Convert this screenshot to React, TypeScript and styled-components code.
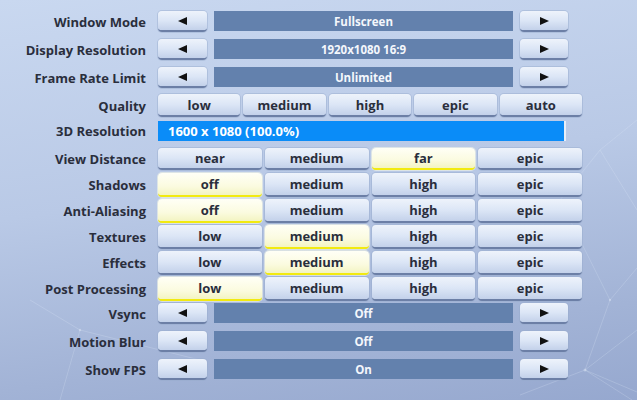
import styled, { createGlobalStyle } from "styled-components";

const Global = createGlobalStyle`
  html, body {
    margin: 0;
    padding: 0;
  }
  body {
    font-family: "Open Sans", "Noto Sans", "DejaVu Sans", sans-serif;
  }
`;

const Screen = styled.div`
  position: relative;
  width: 637px;
  height: 400px;
  overflow: hidden;
  background: linear-gradient(172deg, #c9d8f0 0%, #b9c9e6 45%, #a2b3d6 80%, #96a8cf 100%);
`;

const Web = styled.svg`
  position: absolute;
  inset: 0;
  pointer-events: none;
`;

const Rows = styled.div`
  position: relative;
  display: flex;
  flex-direction: column;
  padding-top: 11px;
`;

const Row = styled.div<{ $h: number }>`
  display: flex;
  align-items: flex-start;
  height: ${(p) => p.$h}px;
`;

const Label = styled.div<{ $h: number }>`
  width: 146px;
  height: ${(p) => p.$h}px;
  margin-right: 12px;
  display: flex;
  align-items: center;
  justify-content: flex-end;
  font-size: 13px;
  font-weight: 700;
  color: #2a2e3c;
  white-space: nowrap;
`;

const Btn = styled.div<{ $w?: number; $h: number; $on?: boolean }>`
  box-sizing: border-box;
  width: ${(p) => (p.$w ? `${p.$w}px` : "auto")};
  height: ${(p) => p.$h}px;
  border-radius: 4px;
  display: flex;
  align-items: center;
  justify-content: center;
  font-size: 13px;
  font-weight: 700;
  color: #2a2e3c;
  background: ${(p) =>
    p.$on
      ? "linear-gradient(180deg, #fffff6 0%, #fbfbe0 60%, #f3f4c2 100%)"
      : "linear-gradient(180deg, #eef3fb 0%, #dce6f6 50%, #c3d1ea 100%)"};
  border-bottom: 2px solid ${(p) => (p.$on ? "#f2ea10" : "#6c7fa6")};
  box-shadow: ${(p) =>
    p.$on ? "0 0 0 1px rgba(255,255,230,0.5)" : "0 0 0 1px rgba(150,170,205,0.45)"};
`;

const Options = styled.div<{ $cols: number }>`
  display: grid;
  grid-template-columns: repeat(${(p) => p.$cols}, 1fr);
  column-gap: 3px;
  width: 424px;
`;

const Bar = styled.div`
  box-sizing: border-box;
  width: 299px;
  height: 20px;
  margin: 0 7px 0 7px;
  background: #6381ad;
  display: flex;
  align-items: center;
  justify-content: center;
  color: #f4f7fc;
  font-size: 11.5px;
  font-weight: 700;
`;

const ResBar = styled.div`
  box-sizing: border-box;
  width: 408px;
  height: 20px;
  background: #0a8cf8;
  border-right: 2px solid #e8eef8;
  display: flex;
  align-items: center;
  padding-left: 10px;
  color: #ffffff;
  font-size: 13px;
  font-weight: 700;
`;

const Tri = styled.span<{ $dir: "l" | "r" }>`
  width: 0;
  height: 0;
  border-top: 4px solid transparent;
  border-bottom: 4px solid transparent;
  ${(p) =>
    p.$dir === "l"
      ? "border-right: 9px solid #111;"
      : "border-left: 9px solid #111;"}
`;

type Choice = { label: string; options: string[]; on: number; h: number; bh: number };

function ArrowRow({ label, value, h }: { label: string; value: string; h: number }) {
  return (
    <Row $h={h}>
      <Label $h={21}>{label}</Label>
      <Btn $w={49} $h={21}>
        <Tri $dir="l" />
      </Btn>
      <Bar>{value}</Bar>
      <Btn $w={48} $h={21}>
        <Tri $dir="r" />
      </Btn>
    </Row>
  );
}

function ChoiceRow({ label, options, on, h, bh }: Choice) {
  return (
    <Row $h={h}>
      <Label $h={bh}>{label}</Label>
      <Options $cols={options.length}>
        {options.map((o, i) => (
          <Btn key={i} $h={bh} $on={i === on}>
            {o}
          </Btn>
        ))}
      </Options>
    </Row>
  );
}

const grid = ["off", "medium", "high", "epic"];
const texes = ["low", "medium", "high", "epic"];

export default function App() {
  return (
    <Screen>
      <Global />
      <Web width="637" height="400">
        <g stroke="#e4ecfa" strokeOpacity="0.22" strokeWidth="1" fill="none">
          <path d="M585 370 L637 330 M585 370 L632 400 M585 370 L520 395 M585 370 L637 392 M610 300 L637 268 M610 300 L585 370 M560 200 L610 300 M600 150 L637 120 M560 200 L600 150 M600 150 L637 210 M30 300 L80 330 M80 330 L60 400 M80 330 L200 360" />
        </g>
        <g fill="#e6eefa" fillOpacity="0.4">
          <circle cx="585" cy="370" r="1.5" />
          <circle cx="610" cy="300" r="1.2" />
          <circle cx="80" cy="330" r="1.2" />
        </g>
      </Web>
      <Rows>
        <ArrowRow label="Window Mode" value="Fullscreen" h={28} />
        <ArrowRow label="Display Resolution" value="1920x1080 16:9" h={28} />
        <ArrowRow label="Frame Rate Limit" value="Unlimited" h={27} />
        <ChoiceRow label="Quality" options={["low", "medium", "high", "epic", "auto"]} on={-1} h={27} bh={23} />
        <Row $h={27}>
          <Label $h={20}>3D Resolution</Label>
          <ResBar>1600 x 1080 (100.0%)</ResBar>
        </Row>
        <ChoiceRow label="View Distance" options={["near", "medium", "far", "epic"]} on={2} h={25} bh={22} />
        <ChoiceRow label="Shadows" options={grid} on={0} h={26} bh={24} />
        <ChoiceRow label="Anti-Aliasing" options={grid} on={0} h={26} bh={24} />
        <ChoiceRow label="Textures" options={texes} on={1} h={26} bh={24} />
        <ChoiceRow label="Effects" options={texes} on={1} h={26} bh={24} />
        <ChoiceRow label="Post Processing" options={texes} on={0} h={26} bh={24} />
        <ArrowRow label="Vsync" value="Off" h={28} />
        <ArrowRow label="Motion Blur" value="Off" h={28} />
        <ArrowRow label="Show FPS" value="On" h={28} />
      </Rows>
    </Screen>
  );
}
